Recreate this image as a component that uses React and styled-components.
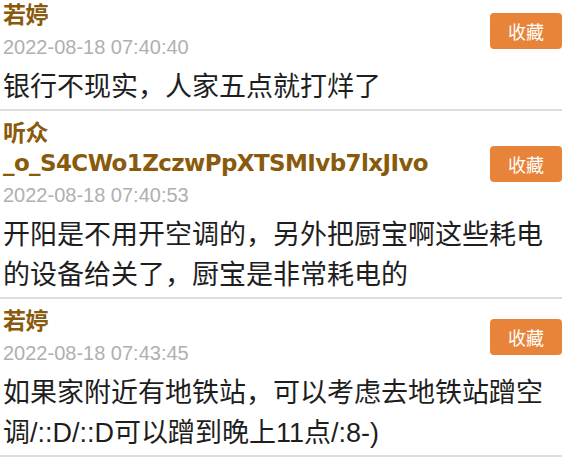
import React from 'react'
import styled, { createGlobalStyle } from 'styled-components';

const GlobalStyle = createGlobalStyle`
  body {
    margin: 0;
    background: #ffffff;
    font-family: "Liberation Sans", "Noto Sans CJK SC", sans-serif;
  }
`;

const comments = [
  {
    id: 1,
    name: ['若婷'],
    time: '2022-08-18 07:40:40',
    text: '银行不现实，人家五点就打烊了',
  },
  {
    id: 2,
    name: ['听众', '_o_S4CWo1ZczwPpXTSMIvb7lxJIvo'],
    time: '2022-08-18 07:40:53',
    text: '开阳是不用开空调的，另外把厨宝啊这些耗电的设备给关了，厨宝是非常耗电的',
  },
  {
    id: 3,
    name: ['若婷'],
    time: '2022-08-18 07:43:45',
    text: '如果家附近有地铁站，可以考虑去地铁站蹭空调/::D/::D可以蹭到晚上11点/:8-)',
  },
];

const App = () => {
  return (
    <>
      <GlobalStyle />
      <List>
        {comments.map((c) => (
          <Item key={c.id}>
            <Header>
              <Meta>
                <Name>
                  {c.name.map((line, i) => <NameLine key={i}>{line}</NameLine>)}
                </Name>
                <Time>{c.time}</Time>
              </Meta>
              <SaveButton type='button'>收藏</SaveButton>
            </Header>
            <Content>{c.text}</Content>
          </Item>
        ))}
      </List>
    </>
  )
}

// the list is scrolled a little, so the first item is cut at the top
const List = styled.div`
  width: 562px;
  margin-top: -7px;
`;

const Item = styled.div`
  padding: 7px 0 2px 3px;
  border-bottom: 2px solid #dedede;
`;

const Header = styled.div`
  display: flex;
  align-items: center;
  justify-content: space-between;
`;

const Meta = styled.div`
  display: flex;
  flex-direction: column;
`;

const Name = styled.div`
  font-family: "DejaVu Sans", "Noto Sans CJK SC", sans-serif;
  font-weight: bold;
  font-size: 23px;
  letter-spacing: -0.6px;
  line-height: 30px;
  color: #8a5a0c;
`;

const NameLine = styled.div``;

const Time = styled.div`
  margin-top: 3px;
  font-size: 20px;
  line-height: 28px;
  color: #b0b0b0;
`;

const SaveButton = styled.button`
  width: 72px;
  height: 36px;
  padding: 0;
  border: none;
  border-radius: 4px;
  background-color: #e8843a;
  color: #ffffff;
  font-family: "Noto Sans CJK SC", sans-serif;
  font-size: 18px;
  cursor: pointer;
`;

const Content = styled.div`
  margin-top: 6px;
  font-size: 27px;
  line-height: 40px;
  color: #1e1e1e;
  word-break: break-all;
`;

export default App;
